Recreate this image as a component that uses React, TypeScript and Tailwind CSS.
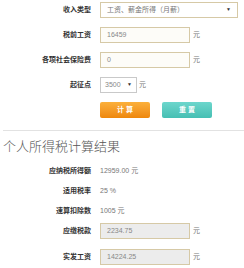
const cjk = { fontFamily: '"Liberation Sans", "Noto Sans CJK SC", sans-serif' }

function Label({ children }: { children: React.ReactNode }) {
  return <div className="w-[91px] shrink-0 text-right text-[7px] font-bold text-[#333]">{children}</div>
}

function Field({ label, value, muted }: { label: string; value: string; muted?: boolean }) {
  return (
    <div className="flex items-center h-[16px]">
      <Label>{label}</Label>
      <div
        className={`ml-[9px] w-[90px] h-[16px] border border-[#d6c9a6] flex items-center pl-[6px] text-[7px] text-[#888] ${
          muted ? 'bg-[#ececec]' : 'bg-[#fdfcf8]'
        }`}
      >
        {value}
      </div>
      <span className="ml-[3px] text-[7px] text-[#777]">元</span>
    </div>
  )
}

function Result({ label, value }: { label: string; value: string }) {
  return (
    <div className="flex items-center h-[10px]">
      <Label>{label}</Label>
      <span className="ml-[9px] text-[7px] text-[#777]">{value}</span>
    </div>
  )
}

export default function App() {
  return (
    <div className="w-[244px] h-[268px] bg-white overflow-hidden" style={cjk}>
      <div className="flex flex-col gap-[9px] pt-[2px]">
        <div className="flex items-center h-[16px]">
          <Label>收入类型</Label>
          <div className="ml-[9px] w-[138px] h-[16px] border border-[#d6c9a6] bg-white flex items-center justify-between px-[6px] text-[7px] text-[#777]">
            <span>工资、薪金所得（月薪）</span>
            <span className="text-[5px] text-[#333]">▼</span>
          </div>
        </div>
        <Field label="税前工资" value="16459" />
        <Field label="各项社会保险费" value="0" />
        <div className="flex items-center h-[16px]">
          <Label>起征点</Label>
          <div className="ml-[9px] w-[37px] h-[16px] border border-[#c9c9c9] bg-white flex items-center justify-between px-[4px] text-[7px] text-[#888]">
            <span>3500</span>
            <span className="text-[5px] text-[#333]">▼</span>
          </div>
          <span className="ml-[2px] text-[7px] text-[#777]">元</span>
        </div>
        <div className="flex items-center h-[16px] pl-[100px] gap-[12px]">
          <div className="w-[50px] h-[16px] rounded-[2px] bg-gradient-to-b from-[#fbb03a] to-[#ee8709] flex items-center justify-center text-[7px] text-white font-bold">
            计 算
          </div>
          <div className="w-[50px] h-[16px] rounded-[2px] bg-gradient-to-b from-[#6cd6cc] to-[#45bfb3] flex items-center justify-center text-[7px] text-white font-bold">
            重 置
          </div>
        </div>
      </div>
      <div className="mt-[12px] ml-[3px] border-t border-[#e2e2e2]" />
      <div className="pl-[3px] pt-[8px] text-[13px] leading-[16px] text-[#555]" style={{ fontWeight: 300 }}>
        个人所得税计算结果
      </div>
      <div className="flex flex-col gap-[10px] mt-[11px]">
        <Result label="应纳税所得额" value="12959.00 元" />
        <Result label="适用税率" value="25 %" />
        <Result label="速算扣除数" value="1005 元" />
      </div>
      <div className="flex flex-col gap-[10px] mt-[7px]">
        <Field label="应缴税款" value="2234.75" muted />
        <Field label="实发工资" value="14224.25" muted />
      </div>
    </div>
  )
}
